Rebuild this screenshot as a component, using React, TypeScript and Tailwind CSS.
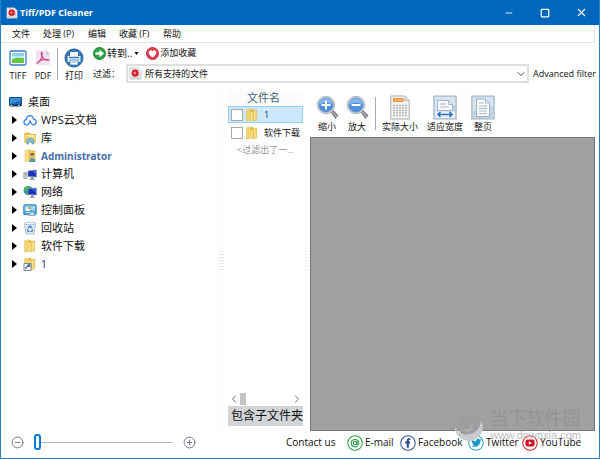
import React from 'react';
import { CircleMinus, CirclePlus, ChevronDown, ChevronLeft, ChevronRight, Minus, Square, X } from 'lucide-react';

interface TreeItem {
  label: string;
  icon: React.ReactNode;
  user?: boolean;
  number?: boolean;
}

interface ToolButtonProps {
  label: string;
  className?: string;
  children: React.ReactNode;
}

const menus = [
  { label: '文件', width: 'w-[31px]' },
  { label: '处理 (P)', width: 'w-[45px]' },
  { label: '编辑', width: 'w-[31px]' },
  { label: '收藏 (F)', width: 'w-[44px]' },
  { label: '帮助', width: 'w-[31px]' },
];

function AppIcon({ className }: { className: string }) {
  return (
    <svg viewBox="0 0 14 14" className={className}>
      <path d="M1 1h9l3 3v9H1z" fill="#f6f8fa" stroke="#a9b3bd" strokeWidth=".7" />
      <path d="M3 2l8 2M2 11l9 1M11 6v5" stroke="#b59a9e" strokeWidth=".7" />
      <circle cx="6.6" cy="6.6" r="3.8" fill="#d81f2c" />
      <circle cx="6.2" cy="6.4" r="1.5" fill="#f58a8e" />
      <path d="M4 4.5l1.5.8M8 4l-.8 1M8.3 8l1.3 1M4.3 9l1-1.2" stroke="#8e0f1a" strokeWidth=".7" />
    </svg>
  );
}

function Folder({ shortcut = false }: { shortcut?: boolean }) {
  return (
    <svg viewBox="0 0 14 14" className="size-[14px] shrink-0">
      <path d="M1.5 1.8l4-1v11.4l-4 1z" fill="#f3d468" stroke="#dcb850" strokeWidth=".4" />
      <path d="M5.5 1.5l2.5-.7v11.7l-2.5.8z" fill="#dfb43c" />
      <path d="M5.5 4l3-.8v9.3l-3 .8z" fill="#f8e08a" />
      <path d="M8 2.5l3.8-.7v10L8 12.7z" fill="#f1cf5f" stroke="#d3ab40" strokeWidth=".4" />
      <path d="M9.3 3.5l1.2-.3v7.8l-1.2.3z" fill="#fbe9a4" />
      {shortcut && (
        <>
          <path d="M1 6.5h7v7H1z" fill="#fff" stroke="#5b6f88" strokeWidth=".8" />
          <path d="M2.7 12C2.7 9.8 4 9 6 9M4.5 7.8h2v2" fill="none" stroke="#1d4f9c" strokeWidth="1.2" />
        </>
      )}
    </svg>
  );
}

function DesktopIcon() {
  return (
    <svg viewBox="0 0 13 12" className="h-[12px] w-[13px]">
      <path d="M.5 1.5h12v8H.5z" fill="#1f6bb5" stroke="#174a80" />
      <path d="M1 2h11v2L1 8z" fill="#3594dc" />
      <path d="M1 8.5h11v2H1z" fill="#17324f" />
      <path d="M1.5 9.5h2M9 9.5h2" stroke="#a8d0ef" />
    </svg>
  );
}

function CloudIcon() {
  return (
    <svg viewBox="0 0 14 14" className="size-[14px]" fill="none" stroke="#3c87ef" strokeWidth="1.3" strokeLinecap="round" strokeLinejoin="round">
      <path d="M7.5 8.3L4.6 11.8H3.8C.2 11.8 0 7 3.4 6.6 3.4 1.4 10 1.2 10.500 6.100c3.700.3 3.500 5.700-.2 5.700H9.600L6.500 8" />
    </svg>
  );
}

function LibraryIcon() {
  return (
    <svg viewBox="0 0 14 14" className="size-[14px]">
      <path d="M1 3l1.5-1.5h4L8 3h5v9H1z" fill="#e4bd50" />
      <path d="M2 4h10v7H2z" fill="#f7e8a8" />
      <path d="M1 5.5l5-.5 1 1h6V12H1z" fill="#f1d067" />
      <path d="M3.5 13V9.5C3.5 6.8 11 6.8 11 9.5V13H8.8v-2.5H5.7V13z" fill="#7fbfe2" stroke="#4a91ba" strokeWidth=".5" />
    </svg>
  );
}

function UserFolderIcon() {
  return (
    <svg viewBox="0 0 14 14" className="size-[14px]">
      <path d="M2 1.5l5-1v11l-5 1z" fill="#f8e085" stroke="#d9b95a" strokeWidth=".5" />
      <path d="M6 2l6-.5V12l-6 .5z" fill="#efcb5e" stroke="#cfac4b" strokeWidth=".5" />
      <circle cx="9.2" cy="6.8" r="2" fill="#d7a77c" />
      <path d="M7.2 6.3c0-3 4-3 4 0-1-.8-2.8-.8-4 0z" fill="#69513b" />
      <path d="M6 13c0-5.2 6.5-5.2 6.5 0z" fill="#5a9c98" />
    </svg>
  );
}

function ComputerIcon({ globe = false }: { globe?: boolean }) {
  return (
    <svg viewBox="0 0 14 14" className="size-[14px]">
      {globe ? (
        <>
          <circle cx="5.2" cy="5.6" r="4.6" fill="#2a86d1" />
          <path d="M3 1.8c2-1.2 4-.5 4.5.4L6 4.3 4 5 2 7 1 5zM3.5 7l2 .5v2.5L4 9.5z" fill="#4dbb50" />
        </>
      ) : (
        <path d="M.8 5.5h3v6h-3z" fill="#c6cdd5" stroke="#7e8a96" strokeWidth=".6" />
      )}
      <path d="M5 4l8.3-1v7L5 9.5z" fill="#1c32b8" stroke="#7b8da3" strokeWidth=".8" />
      <path d="M9.5 4l3.3-.4v4z" fill="#4468e4" />
      <path d="M8 10h2.5v1.6L12.5 13H6l2-1.2z" fill="#8d9aa8" />
      {!globe && <path d="M1.8 7.5h1" stroke="#3b9f3b" />}
    </svg>
  );
}

function ControlPanelIcon() {
  return (
    <svg viewBox="0 0 14 14" className="size-[14px]">
      <rect x=".7" y="1.7" width="12.6" height="10" rx="1" fill="#4aa3dd" stroke="#28699f" strokeWidth=".7" />
      <path d="M1.5 2.5h11v3l-11 3z" fill="#83c9ef" />
      <circle cx="5" cy="6" r="2.3" fill="#fff" />
      <path d="M5 6V3.7A2.3 2.3 0 0 1 7.3 6z" fill="#f08c28" />
      <path d="M8.5 5h3.5M8.5 7h3.5M3 9.5h5" stroke="#e6f5ff" strokeWidth=".9" />
      <path d="M7 9h4l1 3.5H6z" fill="#c8dcea" stroke="#557c9d" strokeWidth=".5" />
    </svg>
  );
}

function RecycleIcon() {
  return (
    <svg viewBox="0 0 14 14" className="size-[14px]">
      <path d="M1.5 2.5h11L11 13H3z" fill="#dce9f2" stroke="#8ba7bc" strokeWidth=".7" />
      <ellipse cx="7" cy="2.5" rx="5.5" ry="1.3" fill="#f4f8fb" stroke="#8ba7bc" strokeWidth=".6" />
      <path d="M5 7l2-2 2 2M9.5 8l-.5 2.5H7.5M4.5 8L5 10.5h1.5" fill="none" stroke="#3679cf" strokeWidth="1.2" />
    </svg>
  );
}

const treeItems: TreeItem[] = [
  { label: 'WPS云文档', icon: <CloudIcon /> },
  { label: '库', icon: <LibraryIcon /> },
  { label: 'Administrator', icon: <UserFolderIcon />, user: true },
  { label: '计算机', icon: <ComputerIcon /> },
  { label: '网络', icon: <ComputerIcon globe /> },
  { label: '控制面板', icon: <ControlPanelIcon /> },
  { label: '回收站', icon: <RecycleIcon /> },
  { label: '软件下载', icon: <Folder /> },
  { label: '1', icon: <Folder shortcut />, number: true },
];

function ToolButton({ label, className = '', children }: ToolButtonProps) {
  return (
    <button type="button" className={`flex shrink-0 flex-col items-center whitespace-nowrap ${className}`}>
      {children}
      <span className="leading-[12px]">{label}</span>
    </button>
  );
}

function Magnifier({ plus = false }: { plus?: boolean }) {
  return (
    <svg viewBox="0 0 24 26" className="h-[26px] w-[24px]">
      <path d="M15.5 17l2.5-2 5.5 5.5-3 3.5z" fill="#73777c" />
      <path d="M17.5 17l4.5 5" stroke="#b5b8bb" strokeWidth="1.2" />
      <circle cx="11" cy="10" r="8.8" fill="#d4d9df" stroke="#a7adb5" strokeWidth=".8" />
      <circle cx="11" cy="10" r="7.2" fill="#4f8fe0" stroke="#6485ac" strokeWidth=".6" />
      <path d="M4.3 9.5C4.5 1 17.5 1 17.7 9.5c-4-2.5-9.4-2.5-13.4 0z" fill="#85b4ec" />
      <path d={plus ? 'M6.5 10h9M11 5.5v9' : 'M6.5 10h9'} stroke="#fff" strokeWidth="2" />
    </svg>
  );
}

function ActualSizeIcon() {
  return (
    <svg viewBox="0 0 20 26" className="h-[26px] w-[20px]">
      <path d="M.8 1h14l4.4 4.5V24H.8z" fill="#f4f4f4" stroke="#a6aaaf" />
      <path d="M14.8 1v4.5h4.4" fill="#dcdfe2" stroke="#a6aaaf" strokeWidth=".7" />
      <rect x="3" y="3" width="10.5" height="4" rx=".5" fill="#ee8e3a" />
      <path d="M4.5 5h7.5" stroke="#ffd8ae" />
      <path d="M3 10.5h14M3 13h14M3 15.5h14M3 18h14M3 20.5h14" stroke="#b0b3b7" strokeWidth="1.5" strokeDasharray="2 1" />
    </svg>
  );
}

function FitIcon({ width = false }: { width?: boolean }) {
  return (
    <svg viewBox="0 0 24 26" className="h-[26px] w-[24px]">
      <rect x=".8" y="1" width="22.4" height="23" fill="#bfd6e9" stroke="#a4b5c2" />
      <path d="M2 2h20v8L2 16z" fill="#d6e5f1" />
      {width ? (
        <>
          <path d="M4.500 5.500h11l4 4V15.500h-15z" fill="#f9fafb" stroke="#98a5b1" strokeWidth=".8" />
          <path d="M15.5 5.5v4h4M7 9h6M7 12h9" fill="none" stroke="#a7b6c4" />
          <path d="M2 16.5h20V23H2z" fill="#edf3f8" />
          <path d="M5 19.5h14M7.5 17L5 19.5 7.5 22M16.5 17l2.5 2.5-2.5 2.5" fill="none" stroke="#2472c5" strokeWidth="1.5" />
        </>
      ) : (
        <>
          <path d="M5.5 4h9l4 4v13.5h-13z" fill="#fafbfc" stroke="#8d9eac" strokeWidth=".8" />
          <path d="M14.5 4v4h4M8 8h5M8 11h8M8 13.5h8M8 16h8M8 18.5h8" fill="none" stroke="#a6b9c8" />
        </>
      )}
    </svg>
  );
}

function TitleBar() {
  return (
    <header className="flex h-[25px] shrink-0 items-center bg-[#0067bd] pl-[5px] text-white">
      <AppIcon className="size-[12px]" />
      <h1 className="ml-[2px] flex-1 text-[9px] font-bold leading-[14px]">Tiff/PDF Cleaner</h1>
      <button type="button" aria-label="Minimize" className="flex w-9 justify-center"><Minus className="size-[10px]" /></button>
      <button type="button" aria-label="Maximize" className="flex w-9 justify-center"><Square className="size-[10px]" strokeWidth={3} /></button>
      <button type="button" aria-label="Close" className="flex w-9 justify-center"><X className="size-[13px]" /></button>
    </header>
  );
}

function Toolbar() {
  return (
    <div className="flex h-[47px] shrink-0 pl-[6px] pt-[5px]">
      <ToolButton label="TIFF" className="w-[22px]">
        <svg viewBox="0 0 18 22" className="h-[22px] w-[18px]">
          <rect x="1" y="3" width="16" height="14" rx="1.5" fill="#fff" stroke="#397bc6" strokeWidth="1.3" />
          <path d="M3 5h12v10H3z" fill="#8fd0f5" />
          <path d="M3 8h12v3H3z" fill="#c5edf9" />
          <path d="M3 11c5-2 8-1 12-1v5H3z" fill="#65c842" />
        </svg>
      </ToolButton>
      <ToolButton label="PDF" className="ml-[3px] w-[22px]">
        <svg viewBox="0 0 16 22" className="h-[22px] w-[16px]">
          <path d="M1 2.5h10l4 4V17H1z" fill="#eee2f0" />
          <path d="M11 2.5v4h4" fill="#cdbdd4" />
          <path d="M1.5 15.5C6 13.5 8 8 7 4.500c-.7-1.200-1.400.8.2 4 1.600 3.300 4.300 4 7.300 3.500M3.500 13.500c3-2 6-2.300 10-1.800" fill="none" stroke="#d73778" strokeWidth="1.1" />
        </svg>
      </ToolButton>
      <div className="ml-[3px] h-[32px] w-px bg-[#a8adb3]" />
      <ToolButton label="打印" className="ml-[4px] w-[24px]">
        <svg viewBox="0 0 20 22" className="h-[22px] w-[20px]">
          <circle cx="10" cy="10" r="9" fill="#3178b8" stroke="#245f96" />
          <path d="M6 4h8v5H6z" fill="#f7fafc" />
          <path d="M3.5 8h13v6h-13z" fill="#dceaf5" />
          <path d="M5 9.5h10" stroke="#3178b8" strokeWidth="1.2" />
          <path d="M6 12h8v5H6z" fill="#fff" stroke="#3178b8" strokeWidth=".8" />
          <path d="M7.5 14h5" stroke="#7ea8ca" />
        </svg>
      </ToolButton>
      <div className="ml-[7px] flex min-w-0 flex-1 flex-col">
        <div className="flex h-[10px] items-center">
          <button type="button" className="flex items-center">
            <svg viewBox="0 0 13 13" className="size-[13px]">
              <circle cx="6.5" cy="6.5" r="6" fill="#2ea344" stroke="#238436" />
              <path d="M2.5 5.2h4v-2.5l4.5 3.8-4.5 3.8V7.8h-4z" fill="#fff" />
            </svg>
            <span className="ml-[1px] text-[10px] leading-[12px]">转到..</span>
            <svg viewBox="0 0 4 3" className="ml-[2px] h-[3px] w-[5px]"><path d="M0 0h4L2 3z" /></svg>
          </button>
          <button type="button" className="ml-[7px] flex items-center">
            <svg viewBox="0 0 13 13" className="size-[13px]">
              <circle cx="6.5" cy="6.5" r="6" fill="#e23b4d" stroke="#ce2638" />
              <path d="M6.5 10.5C1 7 2.5 3.3 4.7 3.3c1 0 1.5.7 1.8 1.3.3-.6.8-1.3 1.8-1.3 2.2 0 3.7 3.7-1.8 7.2z" fill="#fff" />
            </svg>
            <span className="ml-[1px] text-[9px] leading-[12px]">添加收藏</span>
          </button>
        </div>
        <div className="mt-[6px] flex h-[19px] items-center">
          <label htmlFor="filter" className="w-[33px] shrink-0 text-[9px]">过滤：</label>
          <div className="relative min-w-0 flex-1">
            <select id="filter" className="h-[19px] w-full appearance-none border-2 border-[#dfdfdf] bg-white pl-[17px] pr-4 text-[9px] leading-[15px]">
              <option>所有支持的文件</option>
            </select>
            <AppIcon className="pointer-events-none absolute left-[3px] top-[3px] size-[13px]" />
            <ChevronDown className="pointer-events-none absolute right-[2px] top-[4px] size-[12px] text-[#555]" />
          </div>
          <button type="button" className="w-[70px] shrink-0 whitespace-nowrap pl-[4px] text-left text-[9px]">Advanced filter</button>
        </div>
      </div>
    </div>
  );
}

function FolderTree() {
  return (
    <nav className="w-[217px] shrink-0 pt-[3px]">
      <button type="button" className="flex h-[18px] items-center pl-[8px]">
        <DesktopIcon />
        <span className="ml-[6px] text-[11px]">桌面</span>
      </button>
      <ul>
        {treeItems.map((item) => (
          <li key={item.label}>
            <button type="button" className="flex h-[18px] items-center pl-[11px]">
              <svg viewBox="0 0 5 8" className="mr-[6px] h-[8px] w-[5px]"><path d="M0 0l5 4-5 4z" /></svg>
              {item.icon}
              <span className={`ml-[4px] ${item.user ? 'text-[10px] font-bold text-[#466da8]' : item.number ? 'text-[10px] text-[#172b75]' : 'text-[11px]'}`}>
                {item.label}
              </span>
            </button>
          </li>
        ))}
      </ul>
    </nav>
  );
}

function Splitter() {
  return (
    <div className="flex w-[9px] shrink-0 flex-col justify-center gap-[2px] border-l border-[#f7f7f7]">
      {[0, 1, 2, 3, 4, 5, 6].map((dot) => (
        <div key={dot} className="h-px w-[5px] bg-[#e9e9e9]" />
      ))}
    </div>
  );
}

function FileList() {
  return (
    <section className="flex w-[76px] shrink-0 flex-col pb-[5px] pl-px">
      <h2 className="h-[16px] bg-[#fafbfb] pl-[19px] text-[11px] leading-[15px] text-[#456070]">文件名</h2>
      <label className="flex h-[17px] items-center border border-[#99cef5] bg-[#cce8ff] pl-[2px]">
        <input type="checkbox" className="size-[12px] shrink-0 appearance-none border border-[#aaa] bg-white" />
        <span className="ml-[2px]"><Folder /></span>
        <span className="ml-[5px] text-[#172b75]">1</span>
      </label>
      <label className="flex h-[19px] items-center overflow-hidden whitespace-nowrap pl-[3px]">
        <input type="checkbox" className="size-[12px] shrink-0 appearance-none border border-[#aaa] bg-white" />
        <span className="ml-[2px]"><Folder /></span>
        <span className="ml-[5px]">软件下载</span>
      </label>
      <p className="whitespace-nowrap pl-[9px] text-[9px] leading-[16px] text-[#969696]">&lt;过滤出了一...</p>
      <div className="mt-auto flex h-[15px] items-center text-[#666]">
        <button type="button" aria-label="Scroll left"><ChevronLeft className="size-[12px]" /></button>
        <div className="h-[12px] w-[6px] bg-[#c3c3c3]" />
        <button type="button" aria-label="Scroll right" className="ml-auto"><ChevronRight className="size-[12px]" /></button>
      </div>
      <button type="button" className="h-[20px] whitespace-nowrap bg-[#d2d5d7] pl-[3px] text-left text-[12px] leading-[18px]">包含子文件夹</button>
    </section>
  );
}

function Preview() {
  return (
    <section className="flex min-w-0 flex-1 flex-col">
      <div className="flex h-[47px] shrink-0 overflow-hidden pl-[4px] pt-[5px]">
        <ToolButton label="缩小" className="w-[26px]"><Magnifier plus /></ToolButton>
        <ToolButton label="放大" className="ml-[4px] w-[26px]"><Magnifier /></ToolButton>
        <div className="ml-[5px] mt-[2px] h-[33px] w-px shrink-0 bg-[#a5abb1]" />
        <ToolButton label="实际大小" className="ml-[4px] w-[40px]"><ActualSizeIcon /></ToolButton>
        <ToolButton label="适应宽度" className="ml-[5px] w-[40px]"><FitIcon width /></ToolButton>
        <ToolButton label="整页" className="ml-[5px] w-[26px]"><FitIcon /></ToolButton>
      </div>
      <div className="relative flex-1 border border-[#777] bg-[#a0a0a0]">
        <div className="pointer-events-none absolute -bottom-[12px] right-[13px] flex items-end gap-[5px]">
          <svg viewBox="0 0 34 34" className="size-[32px]">
            <circle cx="17" cy="16" r="13" fill="#9c9ea0" />
            <path d="M1 17c1 8 13 13 23 5 4-4 5-8 4-11 6 10 0 21-11 22C8 33 0 26 1 17z" fill="#c9cccf" />
            <path d="M8 20h8l4-7-1 9-6 2z" fill="#a9abad" />
          </svg>
          <div className="whitespace-nowrap">
            <div className="text-[18px] leading-[20px] text-[#949494]">当下软件园</div>
            <div className='font-["Liberation_Sans"] text-[11px] leading-[14px] text-[#bcbcbc]'>www.downxia.com</div>
          </div>
        </div>
      </div>
    </section>
  );
}

const socials = [
  {
    label: 'E-mail',
    width: 'w-[53px]',
    icon: (
      <svg viewBox="0 0 17 17" className="size-[16px] shrink-0" fill="none" stroke="#2b9b48">
        <circle cx="8.5" cy="8.5" r="7.7" strokeWidth="1.1" />
        <circle cx="8.5" cy="8.5" r="1.9" strokeWidth="1.2" />
        <path d="M10.5 6.5v3c0 1.3 2 1 2-.9 0-5-8-5.2-8 0 0 4 4.2 4.8 6.5 3.1" strokeWidth="1.2" />
      </svg>
    ),
  },
  {
    label: 'Facebook',
    width: 'w-[68px]',
    icon: (
      <svg viewBox="0 0 17 17" className="size-[16px] shrink-0">
        <circle cx="8.5" cy="8.5" r="7.7" fill="#fff" stroke="#355493" strokeWidth="1.1" />
        <path d="M7.2 13.5V9H5.5V7h1.7V5.6c0-1.9 1.3-2.5 3.8-2.2v1.9c-1.3-.1-1.6.1-1.6.8V7H11l-.3 2H9.4v4.5z" fill="#27488b" />
      </svg>
    ),
  },
  {
    label: 'Twitter',
    width: 'w-[54px]',
    icon: (
      <svg viewBox="0 0 17 17" className="size-[16px] shrink-0">
        <circle cx="8.5" cy="8.5" r="7.7" fill="#fff" stroke="#31a4ca" strokeWidth="1.1" />
        <path d="M4 4.5c1.2 1.4 2.7 2.1 4.4 2.2-.3-3 3.2-3.6 4.2-1.8l1.7-.4-1 1.5c.1 5.2-5.5 8.1-9.7 5.6 1.3 0 2.3-.3 3-.9-1.3-.3-1.8-1-2-1.7h1C4.3 8.5 3.6 7.6 3.7 6.7l1 .2C3.7 6.2 3.5 5.4 4 4.5z" fill="#1c9bc8" />
      </svg>
    ),
  },
  {
    label: 'YouTube',
    width: 'w-[77px]',
    icon: (
      <svg viewBox="0 0 17 17" className="size-[16px] shrink-0">
        <circle cx="8.5" cy="8.5" r="7.7" fill="#fff" stroke="#d42531" strokeWidth="1.1" />
        <rect x="3.7" y="4.8" width="9.6" height="7.4" rx="2" fill="#ce1525" />
        <path d="M7.3 6.6l3.2 1.9-3.2 1.9z" fill="#fff" />
      </svg>
    ),
  },
];

function StatusBar() {
  const [size, setSize] = React.useState(0);

  return (
    <footer className="flex h-[27px] shrink-0 items-center pb-[4px] pl-[10px] text-[10px]">
      <button type="button" aria-label="Smaller"><CircleMinus className="size-[13px] text-[#65717d]" strokeWidth={1.7} /></button>
      <input
        type="range"
        aria-label="Thumbnail size"
        value={size}
        onChange={(e) => setSize(Number(e.target.value))}
        className="ml-[10px] h-[17px] w-[138px] appearance-none bg-transparent [&::-webkit-slider-runnable-track]:h-px [&::-webkit-slider-runnable-track]:bg-[#b5b5b5] [&::-webkit-slider-thumb]:-mt-[8px] [&::-webkit-slider-thumb]:h-[16px] [&::-webkit-slider-thumb]:w-[7px] [&::-webkit-slider-thumb]:appearance-none [&::-webkit-slider-thumb]:rounded-[3px] [&::-webkit-slider-thumb]:border-2 [&::-webkit-slider-thumb]:border-[#0879d6] [&::-webkit-slider-thumb]:bg-white"
      />
      <button type="button" aria-label="Larger" className="ml-[11px]"><CirclePlus className="size-[13px] text-[#65717d]" strokeWidth={1.7} /></button>
      <span className="ml-auto w-[61px] shrink-0 whitespace-nowrap">Contact us</span>
      {socials.map((social) => (
        <a key={social.label} href="#" className={`flex shrink-0 items-center gap-[2px] whitespace-nowrap ${social.width}`}>
          {social.icon}
          <span>{social.label}</span>
        </a>
      ))}
    </footer>
  );
}

export default function App() {
  return (
    <div className='flex h-screen flex-col overflow-hidden border border-t-0 border-[#2583cc] bg-white font-["Open_Sans","Noto_Sans_CJK_SC",sans-serif] text-[9px] text-[#111]'>
      <TitleBar />
      <nav className="mr-[4px] flex h-[18px] shrink-0 items-center border-b border-r border-[#e2e2e2] pl-[11px]">
        {menus.map((menu) => (
          <button key={menu.label} type="button" className={`whitespace-nowrap text-left leading-[16px] ${menu.width}`}>{menu.label}</button>
        ))}
      </nav>
      <Toolbar />
      <main className="mr-[4px] flex min-h-0 flex-1">
        <FolderTree />
        <Splitter />
        <FileList />
        <div className="flex w-[7px] shrink-0 flex-col items-center justify-center gap-[2px]">
          {[0, 1, 2, 3, 4, 5, 6].map((dot) => <div key={dot} className="h-px w-[3px] bg-[#eee]" />)}
        </div>
        <Preview />
      </main>
      <StatusBar />
    </div>
  );
}
